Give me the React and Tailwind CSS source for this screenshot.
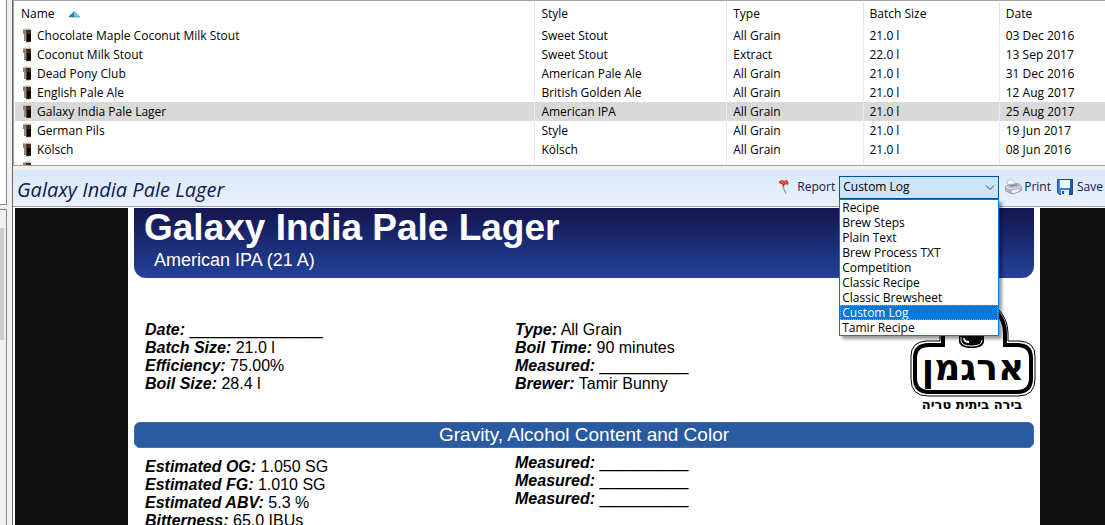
const recipes = [
    { name: 'Chocolate Maple Coconut Milk Stout', style: 'Sweet Stout', type: 'All Grain', batch: '21.0 l', date: '03 Dec 2016' },
    { name: 'Coconut Milk Stout', style: 'Sweet Stout', type: 'Extract', batch: '22.0 l', date: '13 Sep 2017' },
    { name: 'Dead Pony Club', style: 'American Pale Ale', type: 'All Grain', batch: '21.0 l', date: '31 Dec 2016' },
    { name: 'English Pale Ale', style: 'British Golden Ale', type: 'All Grain', batch: '21.0 l', date: '12 Aug 2017' },
    { name: 'Galaxy India Pale Lager', style: 'American IPA', type: 'All Grain', batch: '21.0 l', date: '25 Aug 2017', selected: true },
    { name: 'German Pils', style: 'Style', type: 'All Grain', batch: '21.0 l', date: '19 Jun 2017' },
    { name: 'Kölsch', style: 'Kölsch', type: 'All Grain', batch: '21.0 l', date: '08 Jun 2016' },
];

const reports = ['Recipe', 'Brew Steps', 'Plain Text', 'Brew Process TXT', 'Competition', 'Classic Recipe', 'Classic Brewsheet', 'Custom Log', 'Tamir Recipe'];

const PintIcon = () => (
    <svg width="9" height="15" viewBox="0 0 9 15" shapeRendering="crispEdges" className="shrink-0" aria-hidden="true">
        <rect x="2" y="0" width="5" height="1" fill="#dedad6" />
        <rect x="0" y="1" width="8" height="2" fill="#c2b8ae" />
        <rect x="0" y="2" width="3" height="4" fill="#8f8074" />
        <rect x="1" y="6" width="2" height="7" fill="#94867a" />
        <rect x="3" y="2" width="5" height="12" fill="#42281a" />
        <rect x="4" y="6" width="4" height="7" fill="#0b0505" />
        <rect x="3" y="3" width="1" height="10" fill="#5e4331" />
        <rect x="2" y="14" width="5" height="1" fill="#dcd8d4" />
    </svg>
);

const SortIcon = () => (
    <svg width="11" height="7" viewBox="0 0 11 7" aria-hidden="true">
        <path d="M5.500 0 L0 5 V6 H5.500 Z" fill="#2f7fba" />
        <path d="M5.500 0 L11 5.500 V6 H5.500 Z" fill="#6fc8e4" />
        <path d="M0 6 H11" stroke="#2b6f9e" strokeWidth="0.600" />
    </svg>
);

const FlagIcon = () => (
    <svg width="13" height="16" viewBox="0 0 13 16" aria-hidden="true">
        <path d="M7.500 2.500 L5 8 L8 14.500" stroke="#8c95a0" strokeWidth="1.200" fill="none" />
        <path d="M1 3 Q3 0 5 1.500 Q7 2.500 8.500 0.800 L10.500 3.500 L10 6 Q8 4.500 6.500 6 L5 8 L4 5 L1.500 4.500 Z" fill="#cf2d1c" />
        <path d="M3 2 L6.500 5 M6 1.500 L9 4.500" stroke="#f59a84" strokeWidth="0.900" fill="none" />
    </svg>
);

const PrinterIcon = () => (
    <svg width="17" height="16" viewBox="0 0 17 16" aria-hidden="true">
        <path d="M3.500 7 L1.500 1.500 L8 0.800 L11 5.500 Z" fill="#fafbff" stroke="#aab0c0" strokeWidth="0.700" />
        <path d="M0.500 7.500 L4 5.500 L13 4.500 L16.500 7.500 V11.500 L7 15 L0.500 12 Z" fill="#b4b8c2" stroke="#858b9a" strokeWidth="0.600" />
        <path d="M1 8 L7 10 L16 7.800" stroke="#eceef3" fill="none" />
        <path d="M5 7 L12 6" stroke="#6b7283" strokeWidth="0.800" />
        <path d="M5 11.500 L13.500 9.500 L15.500 12 L8 14.800 Z" fill="#f4f7ff" stroke="#7f879b" strokeWidth="0.600" />
    </svg>
);

const DiskIcon = () => (
    <svg width="16" height="16" viewBox="0 0 16 16" aria-hidden="true">
        <path d="M0.500 0.500 H15.500 V15.500 H2.500 L0.500 13.500 Z" fill="#3f86d8" stroke="#174a9c" />
        <path d="M13 1 H15 V15 H12 Z" fill="#1d57ae" />
        <rect x="3" y="1" width="10" height="8" fill="#eef6ff" />
        <rect x="4" y="11" width="8" height="5" fill="#e8ecf2" />
        <rect x="5" y="12" width="2" height="3" fill="#1d57ae" />
    </svg>
);

const BreweryLogo = () => (
    <svg width="126" height="114" viewBox="0 0 126 114" role="img" aria-label="ארגמן">
        <path d="M30 42 V34 A34 34 0 0 1 98 34 V42 H110 Q125 43 125 57 V80 Q125 97 108 97 H18 Q1 97 1 80 V57 Q1 43 16 42 Z" fill="#fff" stroke="#000" strokeWidth="1" />
        <path d="M33 46 V34 A31 31 0 0 1 95 34 V46 H107 Q121 46 121 59 V79 Q121 93 107 93 H19 Q5 93 5 79 V59 Q5 46 19 46 Z" fill="#fff" stroke="#000" strokeWidth="4" />
        <path d="M49 28 H74 V42 Q74 49 61.500 49 Q49 49 49 42 Z" fill="#000" />
        <path d="M51 38 V42 Q52 47 61.500 47 Q72 47 72 41" stroke="#fff" fill="none" />
        <path d="M54 39 Q54 43 59 43" stroke="#fff" strokeWidth="2" fill="none" />
        <text x="63" y="81" textAnchor="middle" className="font-['DejaVu_Sans',sans-serif] text-[36px] font-bold">ארגמן</text>
        <text x="62" y="110" textAnchor="middle" className="font-['DejaVu_Sans',sans-serif] text-[13px] font-bold">בירה ביתית טריה</text>
    </svg>
);

const Field = ({ label, value }) => (
    <div>
        <strong className="italic">{label}:</strong> {value}
    </div>
);

const LeftStrip = () => (
    <div className="flex w-[7px] shrink-0 flex-col">
        <div className="h-[205px] border-r border-b border-[#828790] bg-white" />
        <div className="mt-1 flex-1 border-t border-r border-[#828790] bg-[#f0f0f0] pt-[18px]">
            <div className="mr-[2px] h-28 bg-[#cdcdcd]" />
        </div>
    </div>
);

const RecipeTable = () => (
    <div className="h-[166px] overflow-hidden border border-r-0 border-[#a0a0a8] bg-white pt-px pl-px text-xs">
        <table className="w-full table-fixed border-collapse whitespace-nowrap">
            <colgroup>
                <col className="w-[47.700%]" />
                <col className="w-[17.600%]" />
                <col className="w-[12.500%]" />
                <col className="w-[12.500%]" />
                <col />
            </colgroup>
            <thead>
                <tr className="h-6 text-left">
                    <th className="border-r border-[#e5e5e5] px-1.5 font-normal">
                        <span className="flex items-center gap-3.5">Name <SortIcon /></span>
                    </th>
                    <th className="border-r border-[#e5e5e5] px-1.5 font-normal">Style</th>
                    <th className="border-r border-[#e5e5e5] px-1.5 font-normal">Type</th>
                    <th className="border-r border-[#e5e5e5] px-1.5 font-normal">Batch Size</th>
                    <th className="px-1.5 font-normal">Date</th>
                </tr>
            </thead>
            <tbody>
                {recipes.map((r) => (
                    <tr key={r.name} className={`h-[19px] ${r.selected ? 'bg-[#d9d9d9]' : ''}`}>
                        <td className="border-r border-[#e4eefa] p-0 pl-2">
                            <span className="flex items-center gap-[5px]"><PintIcon />{r.name}</span>
                        </td>
                        <td className="border-r border-[#e4eefa] px-1.5 py-0">{r.style}</td>
                        <td className="border-r border-[#e4eefa] px-1.5 py-0">{r.type}</td>
                        <td className="border-r border-[#e4eefa] px-1.5 py-0">{r.batch}</td>
                        <td className="px-1.5 py-0">{r.date}</td>
                    </tr>
                ))}
                <tr className="h-[19px]">
                    <td className="border-r border-[#e4eefa] p-0 pl-2"><PintIcon /></td>
                    <td className="border-r border-[#e4eefa]" />
                    <td className="border-r border-[#e4eefa]" />
                    <td className="border-r border-[#e4eefa]" />
                    <td />
                </tr>
            </tbody>
        </table>
    </div>
);

const ReportPicker = () => (
    <div className="relative w-40">
        <select
            id="report"
            defaultValue="Custom Log"
            className="block h-[23px] w-full appearance-none border border-[#005499] bg-[#cce4f7] px-[3px] text-xs text-black outline-none"
        >
            {reports.map((r) => <option key={r}>{r}</option>)}
        </select>
        <svg width="10" height="6" viewBox="0 0 10 6" className="pointer-events-none absolute top-[9px] right-1" aria-hidden="true">
            <path d="M1 0.500 L5 4.500 L9 0.500" fill="none" stroke="#444" />
        </svg>
        <ul role="listbox" aria-label="Report" className="absolute top-full left-0 z-10 w-full border border-[#0078d7] bg-white text-xs leading-[15px] text-black shadow-[3px_3px_3px_rgba(0,0,0,0.4)]">
            {reports.map((r) => (
                <li
                    key={r}
                    role="option"
                    aria-selected={r === 'Custom Log'}
                    className={`px-0.5 ${r === 'Custom Log' ? 'bg-[#0078d7] text-white outline-1 -outline-offset-1 outline-dotted outline-[#ff8728]' : ''}`}
                >
                    {r}
                </li>
            ))}
        </ul>
    </div>
);

const Toolbar = () => (
    <div className="mt-1 flex h-[37px] items-center justify-between border-b border-[#a0a0a8] bg-linear-to-b from-[#dbe9f9] to-[#e8f1fb] pl-1 text-xs text-[#0c2050]">
        <h1 className="pt-1 text-xl italic">Galaxy India Pale Lager</h1>
        <div className="flex items-center pb-0.5">
            <FlagIcon />
            <label htmlFor="report" className="mr-1 ml-1.5">Report</label>
            <ReportPicker />
            <button className="ml-1.5 flex items-center gap-0.5"><PrinterIcon />Print</button>
            <button className="ml-1.5 flex items-center gap-1 pr-0.5"><DiskIcon />Save</button>
        </div>
    </div>
);

const Report = () => (
    <div className="ml-0.5 flex-1 overflow-hidden bg-[#111] pr-[65px] pl-[113px] font-['Liberation_Sans',Arial,sans-serif] text-base leading-[18px] text-black">
        <div className="h-full bg-white px-1.5">
            <div className="h-[70px] rounded-b-xl bg-linear-to-b from-[#131650] to-[#234299] px-2.5 text-white">
                <h2 className="text-[37px] leading-10 font-bold">Galaxy India Pale Lager</h2>
                <p className="pl-2.5 text-lg leading-6">American IPA (21 A)</p>
            </div>
            <div className="relative mt-[43px] grid grid-cols-[370px_1fr] px-[11px]">
                <div>
                    <Field label="Date" value="_______________" />
                    <Field label="Batch Size" value="21.0 l" />
                    <Field label="Efficiency" value="75.00%" />
                    <Field label="Boil Size" value="28.4 l" />
                </div>
                <div>
                    <Field label="Type" value="All Grain" />
                    <Field label="Boil Time" value="90 minutes" />
                    <Field label="Measured" value="__________" />
                    <Field label="Brewer" value="Tamir Bunny" />
                </div>
                <div className="absolute -right-0.5 -bottom-5">
                    <BreweryLogo />
                </div>
            </div>
            <h3 className="mt-[29px] rounded-md border border-[#3f6cb0] bg-[#2a5a9f] text-center text-[19px] leading-6 text-white">Gravity, Alcohol Content and Color</h3>
            <div className="grid grid-cols-[370px_1fr] px-[11px]">
                <div className="pt-2.5">
                    <Field label="Estimated OG" value="1.050 SG" />
                    <Field label="Estimated FG" value="1.010 SG" />
                    <Field label="Estimated ABV" value="5.3 %" />
                    <Field label="Bitterness" value="65.0 IBUs" />
                </div>
                <div className="pt-1.5">
                    <Field label="Measured" value="__________" />
                    <Field label="Measured" value="__________" />
                    <Field label="Measured" value="__________" />
                </div>
            </div>
        </div>
    </div>
);

export default function App() {
    return (
        <div className="flex h-screen overflow-hidden bg-[#f0f0f0] font-['Open_Sans',sans-serif] text-black">
            <LeftStrip />
            <main className="ml-[5px] flex min-w-0 flex-1 flex-col border-l border-[#696969]">
                <RecipeTable />
                <Toolbar />
                <div className="flex min-h-0 flex-1 flex-col bg-white pt-px">
                    <Report />
                </div>
            </main>
        </div>
    );
}
